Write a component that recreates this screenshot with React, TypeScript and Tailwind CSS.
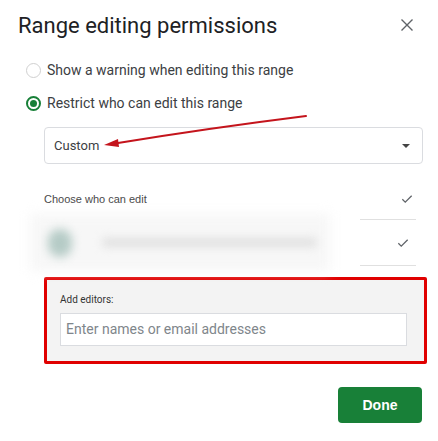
import React from "react";

function Check() {
    return (
        <svg width="14" height="14" viewBox="0 0 24 24" fill="none" stroke="#5f6368" strokeWidth="2.2">
            <path d="M4 12.5l5 5L20 6.5" />
        </svg>
    );
}

export default function App() {
    return (
        <div className="relative w-[438px] h-[441px] bg-white font-['Roboto',sans-serif] text-[#202124] overflow-hidden">
            {/* header */}
            <div className="flex items-start justify-between pl-[18px] pr-[24px] pt-[12px]">
                <h1 className="text-[22px] leading-[28px] font-normal">Range editing permissions</h1>
                <button className="mt-[6px] text-[#5f6368]">
                    <svg width="14" height="14" viewBox="0 0 14 14" stroke="currentColor" strokeWidth="1.4">
                        <path d="M1.5 1.5l11 11M12.5 1.5l-11 11" />
                    </svg>
                </button>
            </div>

            {/* radios */}
            <div className="pl-[26px] mt-[20px] flex flex-col gap-[13px]">
                <label className="flex items-center gap-[6px] h-[20px] text-[14px] text-[#3c4043]">
                    <span className="w-[15px] h-[15px] rounded-full border border-[#d0d0d0]" />
                    Show a warning when editing this range
                </label>
                <label className="flex items-center gap-[6px] h-[20px] text-[14px] text-[#3c4043]">
                    <span className="w-[15px] h-[15px] rounded-full border-2 border-[#188038] flex items-center justify-center">
                        <span className="w-[7px] h-[7px] rounded-full bg-[#188038]" />
                    </span>
                    Restrict who can edit this range
                </label>
            </div>

            {/* dropdown */}
            <div className="ml-[44px] mr-[15px] mt-[14px] h-[37px] rounded-[4px] border border-[#dadce0] flex items-center justify-between pl-[9px] pr-[12px]">
                <span className="text-[13px] text-[#3c4043]">Custom</span>
                <span className="w-0 h-0 border-l-[4px] border-r-[4px] border-t-[4px] border-l-transparent border-r-transparent border-t-[#444]" />
            </div>

            {/* editors list */}
            <div className="ml-[44px] mr-[22px] mt-[25px]">
                <div className="flex items-center justify-between h-[20px] font-['Liberation_Sans',Arial,sans-serif] text-[11px] text-[#4a4a4a]">
                    <span>Choose who can edit</span>
                    <span className="mr-[2px]"><Check /></span>
                </div>
                <div className="ml-[316px] mt-[10px] border-t border-[#e0e0e0]" />
                <div className="relative flex items-center h-[45px]">
                    <div className="absolute inset-y-[-6px] left-[-14px] w-[300px] bg-[#f7f7f7] blur-[6px]" />
                    <span className="relative ml-[4px] w-[24px] h-[28px] rounded-full bg-[#b5cbc6] blur-[5px]" />
                    <span className="relative ml-[30px] w-[215px] h-[9px] rounded bg-[#e0e0e0] blur-[4px]" />
                    <span className="ml-auto mr-[6px] relative"><Check /></span>
                </div>
                <div className="ml-[316px] border-t border-[#e0e0e0]" />
            </div>

            {/* add editors */}
            <div className="ml-[44px] mr-[11px] mt-[11px] border-[3px] border-[#e00000] rounded-[2px] bg-[#f3f3f3] pl-[13px] pr-[17px] pt-[13px] pb-[15px]">
                <div className="text-[10px] leading-[14px] text-[#333]">Add editors:</div>
                <div className="mt-[6px] h-[33px] bg-white border border-[#dadce0] flex items-center pl-[5px] text-[14px] text-[#80868b]">
                    Enter names or email addresses
                </div>
            </div>

            {/* footer */}
            <div className="flex justify-end mr-[16px] mt-[23px]">
                <button className="w-[84px] h-[36px] rounded-[4px] bg-[#188038] text-white text-[14px] font-bold font-['Liberation_Sans',Arial,sans-serif]">
                    Done
                </button>
            </div>

            {/* red annotation arrow */}
            <svg className="absolute left-0 top-0 pointer-events-none" width="438" height="441">
                <path d="M306 116 Q210 128 118 143" fill="none" stroke="#c4141c" strokeWidth="2" strokeLinecap="round" />
                <path d="M104 145 L118 139 L119 147 Z" fill="#c4141c" />
            </svg>
        </div>
    );
}
